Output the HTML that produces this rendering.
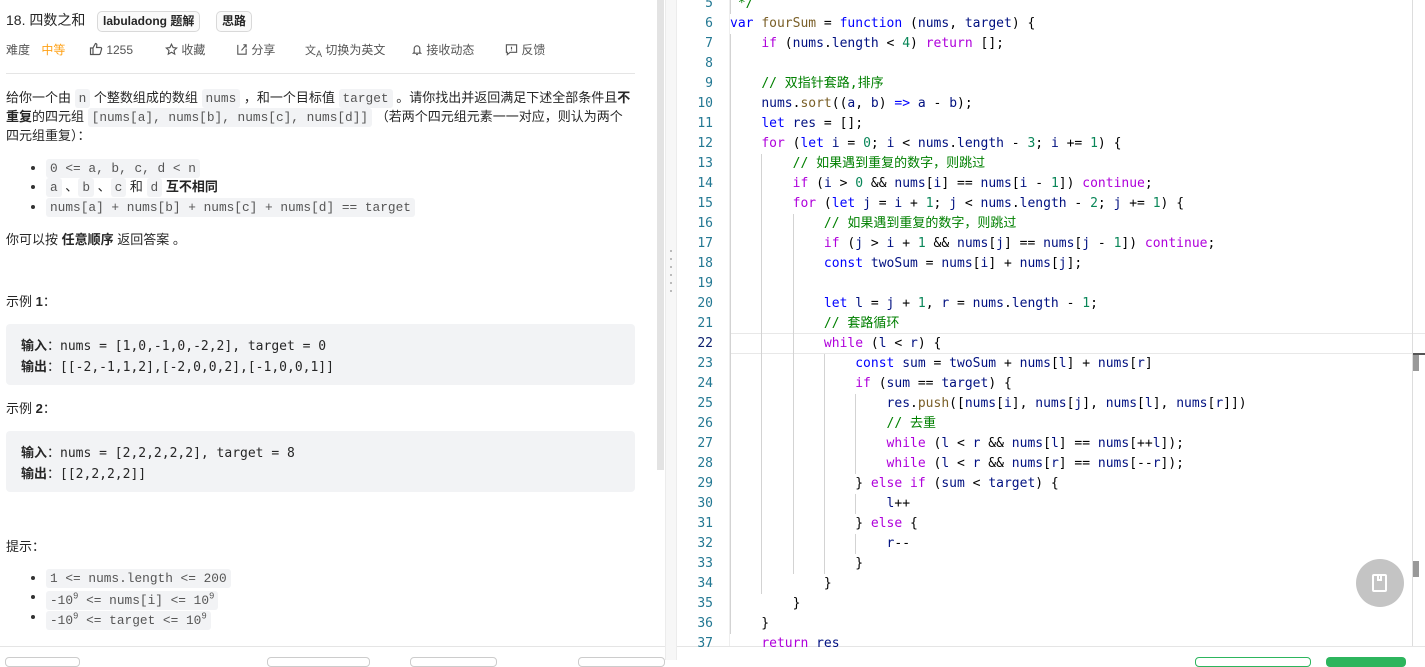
<!DOCTYPE html>
<html><head><meta charset="utf-8"><style>
*{margin:0;padding:0;box-sizing:border-box}
body{width:1425px;height:660px;overflow:hidden;background:#fff;font-family:"Liberation Sans","Noto Sans CJK SC",sans-serif;color:#262626;position:relative}
.abs{position:absolute}
.left{left:0;top:0;width:657px;height:660px}
.t{position:absolute;white-space:nowrap;font-size:13px;line-height:20px}
.ic{background:#f2f3f5;color:#555;font-family:"Liberation Mono",monospace;font-size:12.8px;padding:2px 4px;border-radius:3px}
.tag{position:absolute;top:11px;height:21px;border:1px solid #d9d9d9;border-radius:5px;background:#fafafa;font-size:12px;font-weight:bold;line-height:19px;padding:0 5px;color:#262626}
.meta{position:absolute;top:42px;font-size:12px;color:#555;white-space:nowrap;line-height:16px}
.pre{position:absolute;left:6px;width:629px;background:#f2f3f5;border-radius:4px}
.pre div{position:absolute;left:15px;font-size:13px;font-family:"DejaVu Sans Mono",monospace;white-space:nowrap;color:#262626}
.pre b{font-family:"Liberation Sans","Noto Sans CJK SC",sans-serif}
.dot{position:absolute;left:31px;width:4px;height:4px;border-radius:2px;background:#333}
.code{position:absolute;left:677px;top:0;width:748px;height:647px;overflow:hidden;font-family:"DejaVu Sans Mono",monospace;font-size:13px}
.ln{position:absolute;left:0;width:36px;text-align:right;color:#237893;font-size:13px;line-height:20px}
.cl{position:absolute;left:53px;white-space:pre;line-height:20px;color:#000}
.k{color:#0000ff}.c{color:#af00db}.v{color:#001080}.n{color:#098658}.f{color:#795e26}.g{color:#008000}
.guide{position:absolute;width:1px;background:#d3d3d3}
svg{vertical-align:-2px}
</style></head><body>
<div class="abs left">
<div class="t" style="left:6px;top:10px;font-size:14px;">18. 四数之和</div>
<div class="tag" style="left:97px">labuladong 题解</div>
<div class="tag" style="left:216px">思路</div>
<div class="meta" style="left:6px">难度 <span style="color:#ffa116;margin-left:8px">中等</span></div>
<div class="meta" style="left:89px"><svg width="14" height="14" viewBox="0 0 14 14" fill="none" stroke="#555" stroke-width="1.2"><path d="M1.5 6h2.5v6.5H1.5zM4 6l2.5-4.5c1 0 1.5.8 1.3 1.8L7.5 5.5h4c.8 0 1.3.7 1.1 1.4l-1.3 4.6c-.2.6-.7 1-1.3 1H4"/></svg> 1255</div>
<div class="meta" style="left:165px"><svg width="13" height="13" viewBox="0 0 14 14" fill="none" stroke="#555" stroke-width="1.2"><path d="M7 1.3l1.7 3.6 3.9.5-2.9 2.7.8 3.9L7 10l-3.5 2 .8-3.9L1.4 5.4l3.9-.5z"/></svg> 收藏</div>
<div class="meta" style="left:235px"><svg width="13" height="13" viewBox="0 0 14 14" fill="none" stroke="#555" stroke-width="1.2"><path d="M3 2v10h9V6M7 8l5-6M9 2h3v3"/></svg> 分享</div>
<div class="meta" style="left:305px"><span style="font-size:11px">文<sub style="font-size:9px">A</sub></span> 切换为英文</div>
<div class="meta" style="left:411px"><svg width="12" height="13" viewBox="0 0 12 14" fill="none" stroke="#555" stroke-width="1.2"><path d="M3 10V6a3 3 0 016 0v4l1 1H2zM5 12.5h2"/></svg> 接收动态</div>
<div class="meta" style="left:505px"><svg width="13" height="13" viewBox="0 0 14 14" fill="none" stroke="#555" stroke-width="1.2"><path d="M1.5 2h11v8h-7l-3 2.5V10h-1zM7 4v3M7 8v.5"/></svg> 反馈</div>
<div class="abs" style="left:6px;top:73px;width:629px;height:1px;background:#e5e5e5"></div>
<div class="t" style="left:6px;top:88px">给你一个由 <span class="ic">n</span> 个整数组成的数组 <span class="ic">nums</span> ，和一个目标值 <span class="ic">target</span> 。请你找出并返回满足下述全部条件且<b>不</b></div>
<div class="t" style="left:6px;top:107px"><b>重复</b>的四元组 <span class="ic">[nums[a], nums[b], nums[c], nums[d]]</span> （若两个四元组元素一一对应，则认为两个</div>
<div class="t" style="left:6px;top:126px">四元组重复）：</div>
<div class="dot" style="top:166px"></div><div class="t" style="left:46px;top:158px"><span class="ic">0 &lt;= a, b, c, d &lt; n</span></div>
<div class="dot" style="top:185px"></div><div class="t" style="left:46px;top:177px"><span class="ic">a</span> 、<span class="ic">b</span> 、<span class="ic">c</span> 和 <span class="ic">d</span> <b>互不相同</b></div>
<div class="dot" style="top:205px"></div><div class="t" style="left:46px;top:197px"><span class="ic">nums[a] + nums[b] + nums[c] + nums[d] == target</span></div>
<div class="t" style="left:6px;top:230px">你可以按 <b>任意顺序</b> 返回答案 。</div>
<div class="t" style="left:6px;top:292px">示例 <b>1</b>：</div>
<div class="pre" style="top:324px;height:61px"><div style="top:11px"><b>输入</b>：nums = [1,0,-1,0,-2,2], target = 0</div><div style="top:32px"><b>输出</b>：[[-2,-1,1,2],[-2,0,0,2],[-1,0,0,1]]</div></div>
<div class="t" style="left:6px;top:399px">示例 <b>2</b>：</div>
<div class="pre" style="top:431px;height:61px"><div style="top:11px"><b>输入</b>：nums = [2,2,2,2,2], target = 8</div><div style="top:32px"><b>输出</b>：[[2,2,2,2]]</div></div>
<div class="t" style="left:6px;top:537px">提示：</div>
<div class="dot" style="top:576px"></div><div class="t" style="left:46px;top:568px"><span class="ic">1 &lt;= nums.length &lt;= 200</span></div>
<div class="dot" style="top:595px"></div><div class="t" style="left:46px;top:587px"><span class="ic">-10<sup style="font-size:9px">9</sup> &lt;= nums[i] &lt;= 10<sup style="font-size:9px">9</sup></span></div>
<div class="dot" style="top:615px"></div><div class="t" style="left:46px;top:607px"><span class="ic">-10<sup style="font-size:9px">9</sup> &lt;= target &lt;= 10<sup style="font-size:9px">9</sup></span></div>
<div class="abs" style="left:0;top:646px;width:665px;height:1px;background:#e5e5e5"></div>
<div class="abs" style="left:5px;top:657px;width:75px;height:10px;border:1px solid #ccc;border-radius:4px"></div>
<div class="abs" style="left:267px;top:657px;width:103px;height:10px;border:1px solid #ccc;border-radius:4px"></div>
<div class="abs" style="left:410px;top:657px;width:87px;height:10px;border:1px solid #ccc;border-radius:4px"></div>
<div class="abs" style="left:578px;top:657px;width:87px;height:10px;border:1px solid #ccc;border-radius:4px"></div>
</div>
<div class="abs" style="left:657px;top:0;width:7px;height:470px;background:#e3e3e3"></div>
<div class="abs" style="left:665px;top:0;width:12px;height:660px;background:#f7f7f7;border-left:1px solid #ececec;border-right:1px solid #ececec"></div>
<div class="abs" style="left:670px;top:250px;width:2px;height:45px;background:repeating-linear-gradient(#bbb 0 2px,transparent 2px 8px)"></div>
<div class="code">
<div class="abs" style="left:52px;top:0;width:1px;height:647px;background:#eee"></div>
<div class="abs" style="left:53px;top:333px;width:700px;height:21px;border:1px solid #e8e8e8"></div>
<div class="guide" style="left:53px;top:-6px;height:20px"></div>
<div class="guide" style="left:53px;top:34px;height:600px"></div>
<div class="guide" style="left:84px;top:154px;height:440px"></div>
<div class="guide" style="left:116px;top:214px;height:360px"></div>
<div class="guide" style="left:147px;top:354px;height:220px"></div>
<div class="guide" style="left:178px;top:394px;height:80px"></div>
<div class="guide" style="left:178px;top:494px;height:20px"></div>
<div class="guide" style="left:178px;top:534px;height:20px"></div>
</div>
<div class="abs" style="left:1412px;top:0;width:1px;height:647px;background:#ddd"></div>
<div class="abs" style="left:1413px;top:353px;width:12px;height:2px;background:#555"></div>
<div class="abs" style="left:1413px;top:355px;width:6px;height:16px;background:#999"></div>
<div class="abs" style="left:1413px;top:561px;width:6px;height:16px;background:#999"></div>
<div class="abs" style="left:1356px;top:559px;width:48px;height:48px;border-radius:24px;background:#c4c4c4"></div>
<div class="abs" style="left:1372px;top:574px;width:15px;height:18px;border:2px solid #fff;border-radius:2px"></div>
<div class="abs" style="left:1377px;top:574px;width:5px;height:7px;border:2px solid #fff;border-top:none"></div>
<div class="abs" style="left:677px;top:646px;width:748px;height:1px;background:#e5e5e5"></div>
<div class="abs" style="left:1195px;top:657px;width:116px;height:10px;border:1px solid #2db55d;border-radius:4px"></div>
<div class="abs" style="left:1326px;top:657px;width:80px;height:10px;background:#2db55d;border-radius:4px"></div>
<div class="code" style="pointer-events:none">
<div class="ln" style="top:-6px">5</div><div class="cl" style="top:-6px"><span class="g"> */</span></div>
<div class="ln" style="top:14px">6</div><div class="cl" style="top:14px"><span class="k">var</span> <span class="f">fourSum</span> = <span class="k">function</span> (<span class="v">nums</span>, <span class="v">target</span>) {</div>
<div class="ln" style="top:34px">7</div><div class="cl" style="top:34px">    <span class="c">if</span> (<span class="v">nums</span>.<span class="v">length</span> &lt; <span class="n">4</span>) <span class="c">return</span> [];</div>
<div class="ln" style="top:54px">8</div>
<div class="ln" style="top:74px">9</div><div class="cl" style="top:74px">    <span class="g">// 双指针套路,排序</span></div>
<div class="ln" style="top:94px">10</div><div class="cl" style="top:94px">    <span class="v">nums</span>.<span class="f">sort</span>((<span class="v">a</span>, <span class="v">b</span>) <span class="k">=&gt;</span> <span class="v">a</span> - <span class="v">b</span>);</div>
<div class="ln" style="top:114px">11</div><div class="cl" style="top:114px">    <span class="k">let</span> <span class="v">res</span> = [];</div>
<div class="ln" style="top:134px">12</div><div class="cl" style="top:134px">    <span class="c">for</span> (<span class="k">let</span> <span class="v">i</span> = <span class="n">0</span>; <span class="v">i</span> &lt; <span class="v">nums</span>.<span class="v">length</span> - <span class="n">3</span>; <span class="v">i</span> += <span class="n">1</span>) {</div>
<div class="ln" style="top:154px">13</div><div class="cl" style="top:154px">        <span class="g">// 如果遇到重复的数字，则跳过</span></div>
<div class="ln" style="top:174px">14</div><div class="cl" style="top:174px">        <span class="c">if</span> (<span class="v">i</span> &gt; <span class="n">0</span> &amp;&amp; <span class="v">nums</span>[<span class="v">i</span>] == <span class="v">nums</span>[<span class="v">i</span> - <span class="n">1</span>]) <span class="c">continue</span>;</div>
<div class="ln" style="top:194px">15</div><div class="cl" style="top:194px">        <span class="c">for</span> (<span class="k">let</span> <span class="v">j</span> = <span class="v">i</span> + <span class="n">1</span>; <span class="v">j</span> &lt; <span class="v">nums</span>.<span class="v">length</span> - <span class="n">2</span>; <span class="v">j</span> += <span class="n">1</span>) {</div>
<div class="ln" style="top:214px">16</div><div class="cl" style="top:214px">            <span class="g">// 如果遇到重复的数字，则跳过</span></div>
<div class="ln" style="top:234px">17</div><div class="cl" style="top:234px">            <span class="c">if</span> (<span class="v">j</span> &gt; <span class="v">i</span> + <span class="n">1</span> &amp;&amp; <span class="v">nums</span>[<span class="v">j</span>] == <span class="v">nums</span>[<span class="v">j</span> - <span class="n">1</span>]) <span class="c">continue</span>;</div>
<div class="ln" style="top:254px">18</div><div class="cl" style="top:254px">            <span class="k">const</span> <span class="v">twoSum</span> = <span class="v">nums</span>[<span class="v">i</span>] + <span class="v">nums</span>[<span class="v">j</span>];</div>
<div class="ln" style="top:274px">19</div>
<div class="ln" style="top:294px">20</div><div class="cl" style="top:294px">            <span class="k">let</span> <span class="v">l</span> = <span class="v">j</span> + <span class="n">1</span>, <span class="v">r</span> = <span class="v">nums</span>.<span class="v">length</span> - <span class="n">1</span>;</div>
<div class="ln" style="top:314px">21</div><div class="cl" style="top:314px">            <span class="g">// 套路循环</span></div>
<div class="ln" style="top:334px;color:#0b216f">22</div><div class="cl" style="top:334px">            <span class="c">while</span> (<span class="v">l</span> &lt; <span class="v">r</span>) {</div>
<div class="ln" style="top:354px">23</div><div class="cl" style="top:354px">                <span class="k">const</span> <span class="v">sum</span> = <span class="v">twoSum</span> + <span class="v">nums</span>[<span class="v">l</span>] + <span class="v">nums</span>[<span class="v">r</span>]</div>
<div class="ln" style="top:374px">24</div><div class="cl" style="top:374px">                <span class="c">if</span> (<span class="v">sum</span> == <span class="v">target</span>) {</div>
<div class="ln" style="top:394px">25</div><div class="cl" style="top:394px">                    <span class="v">res</span>.<span class="f">push</span>([<span class="v">nums</span>[<span class="v">i</span>], <span class="v">nums</span>[<span class="v">j</span>], <span class="v">nums</span>[<span class="v">l</span>], <span class="v">nums</span>[<span class="v">r</span>]])</div>
<div class="ln" style="top:414px">26</div><div class="cl" style="top:414px">                    <span class="g">// 去重</span></div>
<div class="ln" style="top:434px">27</div><div class="cl" style="top:434px">                    <span class="c">while</span> (<span class="v">l</span> &lt; <span class="v">r</span> &amp;&amp; <span class="v">nums</span>[<span class="v">l</span>] == <span class="v">nums</span>[++<span class="v">l</span>]);</div>
<div class="ln" style="top:454px">28</div><div class="cl" style="top:454px">                    <span class="c">while</span> (<span class="v">l</span> &lt; <span class="v">r</span> &amp;&amp; <span class="v">nums</span>[<span class="v">r</span>] == <span class="v">nums</span>[--<span class="v">r</span>]);</div>
<div class="ln" style="top:474px">29</div><div class="cl" style="top:474px">                } <span class="c">else if</span> (<span class="v">sum</span> &lt; <span class="v">target</span>) {</div>
<div class="ln" style="top:494px">30</div><div class="cl" style="top:494px">                    <span class="v">l</span>++</div>
<div class="ln" style="top:514px">31</div><div class="cl" style="top:514px">                } <span class="c">else</span> {</div>
<div class="ln" style="top:534px">32</div><div class="cl" style="top:534px">                    <span class="v">r</span>--</div>
<div class="ln" style="top:554px">33</div><div class="cl" style="top:554px">                }</div>
<div class="ln" style="top:574px">34</div><div class="cl" style="top:574px">            }</div>
<div class="ln" style="top:594px">35</div><div class="cl" style="top:594px">        }</div>
<div class="ln" style="top:614px">36</div><div class="cl" style="top:614px">    }</div>
<div class="ln" style="top:634px">37</div><div class="cl" style="top:634px">    <span class="c">return</span> <span class="v">res</span></div>
</div>
</body></html>
